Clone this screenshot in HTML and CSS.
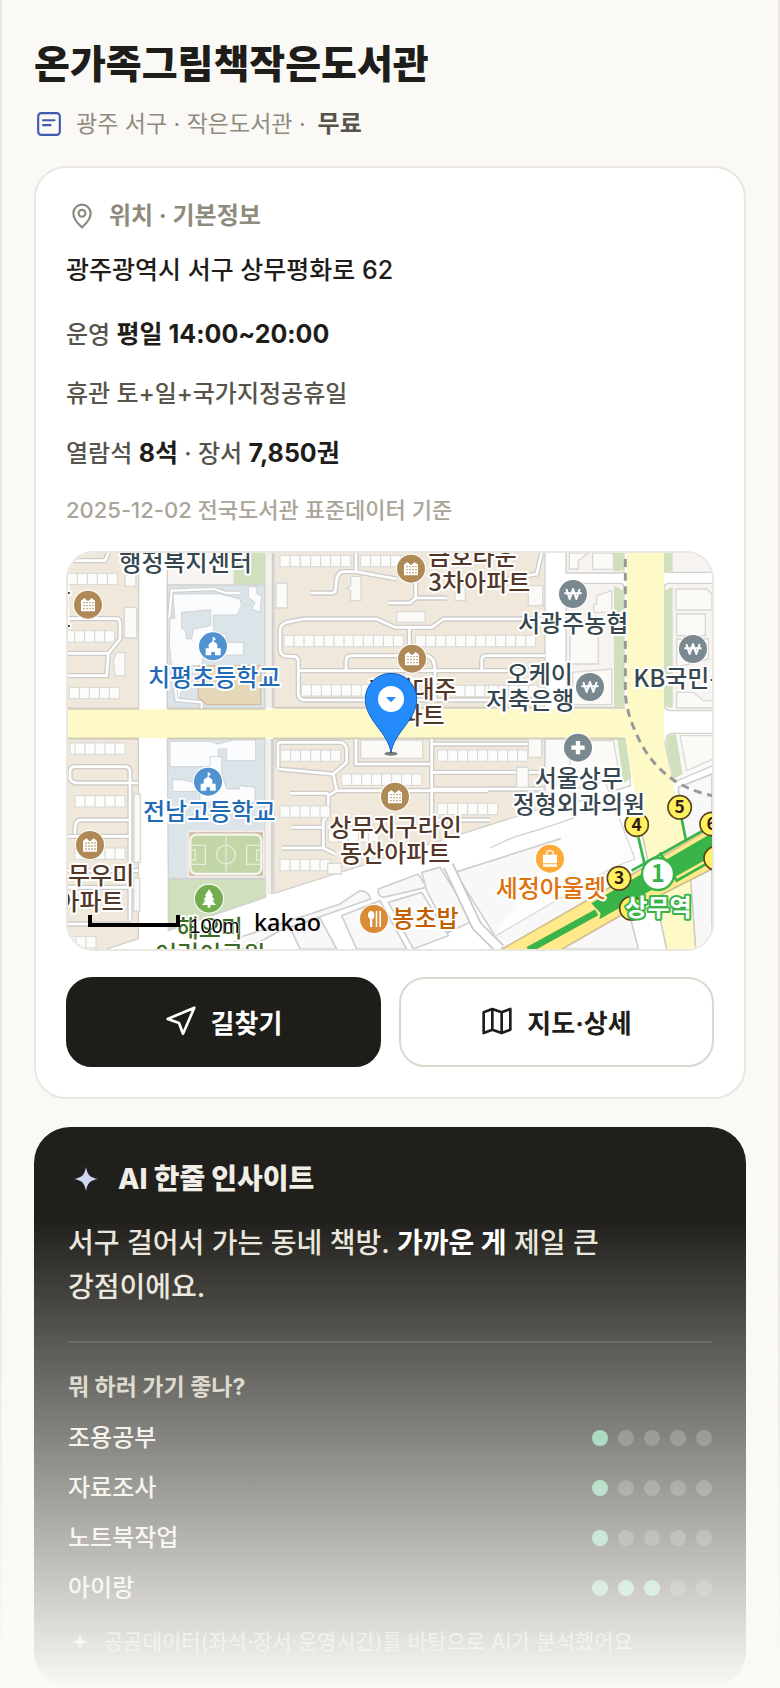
FILE: index.html
```html
<!DOCTYPE html>
<html lang="ko">

<head>
    <meta charset="UTF-8">
    <meta name="viewport" content="width=device-width, initial-scale=1.0">
    <title>온가족그림책작은도서관</title>
    <link rel="stylesheet" href="styles.css">
</head>

<body>
    <main class="page">
        <header class="head">
            <h1>온가족그림책작은도서관</h1>
            <p class="meta">
                <svg class="meta-icon" viewBox="0 0 24 24" aria-hidden="true">
                    <rect x="2" y="2" width="20" height="20" rx="3" />
                    <path d="M6.500 8.500h10.500M6.500 13h7" />
                </svg>
                <span>광주 서구 · 작은도서관 ·</span>
                <b>무료</b>
            </p>
        </header>

        <section class="card">
            <h2 class="card-title">
                <svg class="pin-icon" viewBox="0 0 24 24" aria-hidden="true">
                    <path d="M12 22.500C8 19 4 15 4 9.500a8 8 0 0 1 16 0C20 15 16 19 12 22.500Z" />
                    <circle cx="12" cy="9.500" r="3.200" />
                </svg>
                위치 · 기본정보
            </h2>
            <p class="address">광주광역시 서구 상무평화로 62</p>
            <p class="info">운영 <b>평일 14:00~20:00</b></p>
            <p class="info">휴관 토+일+국가지정공휴일</p>
            <p class="info">열람석 <b>8석</b> · 장서 <b>7,850권</b></p>
            <p class="source">2025-12-02 전국도서관 표준데이터 기준</p>

            <div class="map">
                <svg class="map-svg" viewBox="24 27 1932 1188" preserveAspectRatio="xMidYMid slice" role="img" aria-label="지도">
                    <defs>
                        <g id="apt">
                            <circle r="45" fill="#fff" />
                            <circle r="42" fill="#af8a57" />
                            <path d="M-21 20V-12L-11-20L-2-12H2L11-20L21-12V20Z" fill="#fff" />
                            <path d="M-14-6H17M-14 3H17M-14 12H17" stroke="#af8a57" stroke-width="4" stroke-dasharray="4 5" />
                        </g>
                        <g id="school">
                            <circle r="45" fill="#fff" />
                            <circle r="42" fill="#5093d0" />
                            <path d="M-22 27V6H-13V-6L-1-15V-28H2L9-22L2-17V-15L13-6V6H23V27H6V17H-5V27Z" fill="#fff" />
                        </g>
                        <g id="bank">
                            <circle r="45" fill="#fff" />
                            <circle r="42" fill="#7a898f" />
                            <path d="M-20-15L-10 15L0-15L10 15L20-15M-26-2H26" fill="none" stroke="#fff" stroke-width="6" stroke-linejoin="round" />
                        </g>
                        <g id="houses">
                            <rect width="150" height="34" fill="#fcfcfa" stroke="#d8d8d6" stroke-width="3" />
                            <path d="M30 0V34M60 0V34M90 0V34M120 0V34" stroke="#d2d2d0" stroke-width="3" />
                        </g>
                        <path id="lanes" d="M24 50H135L145 27M24 224H170Q180 224 180 240V285L145 328H24M145 328L140 395H24M30 680Q32 668 45 668H195Q210 668 210 685V1130M30 680V700Q30 715 50 717H235M45 870Q42 828 62 828H210M24 877H210M24 980H235M24 1030H210M24 1140H210M888 27V82M752 147H815Q828 147 828 125Q828 85 850 83H888L1010 105M1067 100V162H1160M1067 162L1050 177H985M1290 225H1150L1115 250H1005L950 225H730L680 235Q660 242 660 260V315Q660 335 680 337H700Q715 337 715 355V450Q715 468 735 468H1440M715 380H1455M858 378V350Q858 335 875 335H1100Q1125 340 1125 380V465M1048 250V330M1265 378V350Q1265 335 1280 335H1455M1290 225H1450M1445 27L1430 90L1290 115M654 670V600Q654 595 665 595H840Q860 598 860 620V655L820 690L655 675M820 690L830 740L805 755V810L790 830V910M830 740H1285M888 585V660H1110M1115 585V870M1115 600H1450M1115 685H1450M1115 735H1450M690 748H805M695 850H790M665 912H790L825 930M1115 828H1290" />
                    </defs>

                    <rect x="24" y="27" width="1932" height="1188" fill="#fff" />

                    <!-- blocks -->
                    <g stroke="#d2d1cf" stroke-width="4">
                        <path d="M10 10H236V492H10ZM10 585H235V1184L110 1225H10Z" fill="#f0e8da" />
                        <path d="M322 10H615V492H322Z" fill="#f6f3f0" />
                        <path d="M322 123H615V492H322ZM322 585H615V1003H325Z" fill="#dbe4e8" />
                        <path d="M325 1005H617V1060L325 1160Z" fill="#d0dfbc" />
                        <path d="M642 10H1455V490H642ZM640 585H1455V790L642 1048Z" fill="#f0e8da" />
                        <path d="M1518 10H1692V80Q1692 87 1684 87H1518ZM1518 118H1680Q1692 118 1692 132V490H1518Z" fill="#f6f3f0" />
                        <path d="M1812 10H1956V85H1820Q1812 85 1812 75ZM1812 135Q1812 118 1826 118H1970V500H1830Q1812 498 1812 480Z" fill="#f6f3f0" />
                        <path d="M1815 600Q1815 568 1840 568H1970V660L1840 715Z" fill="#f9f9f7" />
                        <path d="M1455 790V585H1695L1712 725L1500 790Z" fill="#f9f9f7" />
                    </g>
                    <path d="M521 27H617V121H521ZM1662 27H1692V78L1662 84ZM1662 125L1692 140V488H1662ZM1814 27H1838V83H1814ZM1814 140L1838 128V490H1822L1814 480ZM1818 600L1824 575L1848 570L1868 690L1840 705ZM1672 585H1697L1714 700L1690 720Z" fill="#d0dfbc" />
                    <path d="M617 27H640V492H617ZM617 585H638V1050H617Z" fill="#f3f1ec" />

                    <!-- southern blocks under the diagonal road -->
                    <g fill="#f8f8f8" stroke="#cfcfcf" stroke-width="5">
                        <path d="M500 1215L540 1180L840 1080L900 1040Q925 1040 932 1065L660 1160L560 1215Z" />
                        <path d="M955 1035L1075 990L1100 1030L970 1060Q950 1055 955 1035Z" />
                        <path d="M720 1215L690 1150L780 1122L830 1215Z" />
                        <path d="M845 1115L960 1070L1040 1215H890Z" />
                        <path d="M985 1075L1085 1045L1165 1175L1060 1215Z" />
                        <path d="M1085 985L1140 970L1240 1130L1165 1165L1100 1040Z" />
                        <path d="M1185 985L1640 840L1735 1215H1330Z" />
                        <path d="M1755 1000L1956 890V1215H1905L1880 1040Z" />
                        <path d="M1855 730L1956 690V860L1870 900Z" />
                    </g>
                    <path d="M1165 965L1250 1145L1320 1215" fill="none" stroke="#c8c8c8" stroke-width="34" />
                    <path d="M1165 965L1250 1145L1320 1215" fill="none" stroke="#fff" stroke-width="24" />
                    <path d="M1290 912L1360 880L1475 845L1700 765" fill="none" stroke="#d2d1cf" stroke-width="4" />
                    <path d="M1300 1180L1650 975L1725 945L1630 700" fill="#fdfdfd" stroke="#d9d9d9" stroke-width="4" />

                    <!-- school grounds -->
                    <g fill="#fbfcfe" stroke="#d0d3d6" stroke-width="3">
                        <path d="M343 150L480 150L540 165L545 185L530 213H460V265L498 270V295H550V333H430L425 365H370L360 470H345L328 300L330 225L345 222L338 150Z" />
                        <path d="M565 128H590V150L605 155L600 205L575 195L585 175L565 160Z" />
                        <path d="M330 592H450L475 600L520 588H587V650H500V615H475V668H330Z" />
                        <path d="M338 707H365L400 715H420V742H338ZM450 638H485V690L500 735H538V725L585 730V775H420V740H450Z" />
                    </g>
                    <path d="M365 205L452 197V245L400 255L395 285H380L375 255H365Z" fill="#dbe4e8" stroke="#d0d3d6" stroke-width="3" />
                    <path d="M328 220L335 140L460 135L500 147H540M345 430L350 468L425 475V495" fill="none" stroke="#cdcfd1" stroke-width="14" />
                    <path d="M328 220L335 140L460 135L500 147H540M345 430L350 468L425 475V495" fill="none" stroke="#fff" stroke-width="7" />
                    <path d="M415 365H602V482H440L415 460Z" fill="#e5d8b9" stroke="#d5bfa2" stroke-width="4" />
                    <rect x="385" y="862" width="226" height="136" fill="#d1bea9" stroke="#f4ece4" stroke-width="5" />
                    <rect x="391" y="872" width="213" height="118" rx="18" fill="#c2d6a7" stroke="#f4f5ec" stroke-width="7" />
                    <path d="M498 872V990M394 904H436V961H394M602 904H560V961H602M394 918H406V948H394M602 918H590V948H602" fill="none" stroke="#e4edd8" stroke-width="4" />
                    <circle cx="498" cy="932" r="28" fill="none" stroke="#e4edd8" stroke-width="4" />

                    <!-- yellow roads -->
                    <path d="M24 496H1702V582H24Z" fill="#fdfac8" />
                    <path d="M1700 27H1812V600L1840 720L1888 950L1907 1215H1820L1800 1080L1740 840L1700 600Z" fill="#fdfac8" />
                    <path d="M24 495H236M322 495H615M640 492H1455M1518 492H1695M24 583H236M322 583H615M640 583H1455M1455 583H1695M1740 840L1820 1215M1888 950L1907 1215" fill="none" stroke="#d3cdb8" stroke-width="5" />

                    <!-- lanes inside the apartment blocks -->
                    <use href="#lanes" fill="none" stroke="#cccccb" stroke-width="16" />
                    <use href="#lanes" fill="none" stroke="#fff" stroke-width="8" />
                    <path d="M638 27V492M636 585V1050" stroke="#cccccb" stroke-width="5" />

                    <!-- houses -->
                    <use href="#houses" x="22" y="88" />
                    <use href="#houses" x="14" y="260" />
                    <use href="#houses" x="28" y="430" />
                    <use href="#houses" x="30" y="597" />
                    <use href="#houses" x="45" y="597" />
                    <use href="#houses" x="45" y="755" />
                    <use href="#houses" x="45" y="912" />
                    <use href="#houses" x="-42" y="1178" />
                    <use href="#houses" x="660" y="34" />
                    <use href="#houses" x="722" y="34" />
                    <use href="#houses" x="902" y="34" />
                    <use href="#houses" x="672" y="274" />
                    <use href="#houses" x="822" y="274" />
                    <use href="#houses" x="880" y="274" />
                    <use href="#houses" x="1067" y="274" />
                    <use href="#houses" x="1217" y="274" />
                    <use href="#houses" x="1277" y="274" />
                    <use href="#houses" x="724" y="422" />
                    <use href="#houses" x="844" y="422" />
                    <use href="#houses" x="1185" y="424" />
                    <use href="#houses" x="1285" y="424" />
                    <use href="#houses" x="662" y="618" />
                    <use href="#houses" x="692" y="618" />
                    <use href="#houses" x="845" y="690" />
                    <use href="#houses" x="935" y="690" />
                    <use href="#houses" x="660" y="786" />
                    <use href="#houses" x="660" y="946" />
                    <use href="#houses" x="805" y="860" />
                    <use href="#houses" x="1133" y="618" />
                    <use href="#houses" x="1253" y="618" />
                    <use href="#houses" x="1133" y="778" />
                    <use href="#houses" x="1163" y="778" />
                    <g fill="#fbfaf6" stroke="#d8d8d6" stroke-width="4">
                        <path d="M195 85H228V127H195ZM193 190H230V282H193ZM168 326H195V396H165L160 350ZM222 750H241V955H222ZM221 1003H239V1102H221Z" />
                        <path d="M648 117H682V192H648ZM872 97H903V170H872V140L860 133L872 126ZM1010 203H1096V235H1010ZM1185 125H1216V170H1185ZM902 588H1088V643H902ZM803 958H844V990H803Z" />
                        <path d="M1405 125H1448V185H1405ZM1405 585H1445V640H1405ZM1370 670H1405V730H1370Z" />
                        <path d="M1528 27H1585L1555 50V75H1528ZM1598 27H1660V76H1598ZM1530 230H1615V360H1530ZM1610 155L1655 140V205H1602V180H1610ZM1538 385L1655 375V482H1538ZM1530 590H1660L1680 700L1530 740Z" />
                        <path d="M1848 135H1940L1956 150V198H1848ZM1850 210H1936V275H1850ZM1850 285H1945V345L1850 370ZM1850 445H1900L1930 470H1970V492H1850ZM1860 575H1970V640L1880 680Z" />
                    </g>

                    <!-- railway -->
                    <path d="M1696 45V445Q1698 500 1725 560Q1790 720 1956 755" fill="none" stroke="#999" stroke-width="9" stroke-dasharray="24 17" />

                    <!-- subway -->
                    <path d="M1300 1230L1650 1030L1956 850V975L1690 1110L1480 1230Z" fill="#ffe98a" stroke="#cdbf92" stroke-width="5" />
                    <path d="M1405 1218L1610 1105" stroke="#38b449" stroke-width="20" />
                    <path d="M1594 1078L1965 862V932L1618 1126L1622 1108Z" fill="#38b449" />
                    <path d="M1715 980L1960 842M1735 880L1755 965M1865 825L1877 885M1800 925L1850 1010L1956 950" fill="none" stroke="#38b449" stroke-width="8" />
                    <g font-size="52" font-weight="700" text-anchor="middle" class="exit">
                        <g fill="#fff060" stroke="#57411f" stroke-width="5">
                            <circle cx="1730" cy="842" r="35" />
                            <circle cx="1859" cy="790" r="35" />
                            <circle cx="1955" cy="840" r="35" />
                            <circle cx="1677" cy="1003" r="35" />
                            <circle cx="1714" cy="1093" r="35" />
                            <circle cx="1967" cy="943" r="35" />
                        </g>
                        <text x="1730" y="860">4</text>
                        <text x="1859" y="808">5</text>
                        <text x="1955" y="858">6</text>
                        <text x="1677" y="1021">3</text>
                    </g>
                    <circle cx="1794" cy="990" r="48" fill="#fff" stroke="#38b449" stroke-width="7" />
                    <text x="1794" y="1015" font-size="70" font-weight="700" text-anchor="middle" fill="#38b449" class="line-no">1</text>

                    <!-- places -->
                    <use href="#apt" x="84" y="182" />
                    <use href="#apt" x="1053" y="74" />
                    <use href="#apt" x="1056" y="344" />
                    <use href="#apt" x="1005" y="758" />
                    <use href="#apt" x="90" y="903" />
                    <use href="#school" x="459" y="307" />
                    <use href="#school" x="444" y="713" />
                    <use href="#bank" x="1539" y="150" />
                    <use href="#bank" x="1590" y="429" />
                    <use href="#bank" x="1899" y="315" />
                    <g transform="translate(1554 611)">
                        <circle r="45" fill="#fff" />
                        <circle r="42" fill="#7a898f" />
                        <path d="M-20 0H20M0-20V20" stroke="#fff" stroke-width="13" />
                    </g>
                    <g transform="translate(447 1064)">
                        <circle r="45" fill="#fff" />
                        <circle r="42" fill="#73ae4e" />
                        <path d="M0-28L13-9H8L17 5H10L21 19H4V27H-4V19H-21L-10 5H-17L-8-9H-13Z" fill="#fff" />
                    </g>
                    <g transform="translate(942 1125)">
                        <circle r="45" fill="#fff" />
                        <circle r="42" fill="#d98b36" />
                        <path d="M-9-25a12 14 0 0 1 4 26V24H-12V1a12 14 0 0 1 3-26ZM5-24H10V24H5ZM16-24H21V24H16Z" fill="#fff" />
                    </g>
                    <g transform="translate(1470 944)">
                        <circle r="45" fill="#fff" />
                        <circle r="42" fill="#fdaa38" />
                        <path d="M-21-12H21V14H-21ZM-21 17H21V24H-21Z" fill="#fff" />
                        <path d="M-10-5V-15a10 9 0 0 1 20 0V-5" fill="none" stroke="#fff" stroke-width="4" />
                    </g>

                    <g class="labels">
                        <g fill="#37474f">
                            <text x="178" y="82">행정복지센터</text>
                            <text x="1374" y="264">서광주농협</text>
                            <text x="1340" y="417">오케이</text>
                            <text x="1278" y="494">저축은행</text>
                            <text x="1720" y="430">KB국민은행</text>
                            <text x="1424" y="729">서울상무</text>
                            <text x="1358" y="808">정형외과의원</text>
                        </g>
                        <g fill="#1f6bb8">
                            <text x="264" y="426">치평초등학교</text>
                            <text x="249" y="829">전남고등학교</text>
                        </g>
                        <g fill="#523729">
                            <text x="1105" y="62">금호타운</text>
                            <text x="1105" y="141">3차아파트</text>
                            <text x="925" y="462">라인대주</text>
                            <text x="955" y="540">아파트</text>
                            <text x="808" y="875">상무지구라인</text>
                            <text x="840" y="953">동산아파트</text>
                            <text x="24" y="1021">무우미</text>
                            <text x="-8" y="1099">아파트</text>
                            <text x="-34" y="170">동</text>
                            <text x="-34" y="250">트</text>
                        </g>
                        <g fill="#3b6b22">
                            <text x="350" y="1178">해오미</text>
                            <text x="285" y="1256">어린이공원</text>
                        </g>
                        <text x="997" y="1150" fill="#c45f00">봉초밥</text>
                        <text x="1307" y="1060" fill="#e0700c">세정아울렛</text>
                        <text x="1696" y="1115" class="station">상무역</text>
                    </g>

                    <!-- current marker -->
                    <ellipse cx="993" cy="629" rx="20" ry="6" fill="#000" opacity=".5" />
                    <path d="M993 627C985 565 916 530 916 465A77 77 0 0 1 1070 465C1070 530 1001 565 993 627Z" fill="#258bfb" stroke="#1560c4" stroke-width="3" />
                    <circle cx="993" cy="465" r="39" fill="#fff" />
                    <path d="M978 459H1008L993 475Z" fill="#258bfb" />

                    <!-- scale bar -->
                    <path d="M90 1113V1143H354V1113" fill="none" stroke="#000" stroke-width="12" />
                    <text x="388" y="1166" class="scale-text">100m</text>
                    <text x="582" y="1160" class="brand">kakao</text>
                </svg>
            </div>

            <div class="actions">
                <button class="btn btn-dark" type="button">
                    <svg class="btn-icon" viewBox="0 0 24 24" aria-hidden="true">
                        <path d="M22 2L2 10.500l8.500 3L13.500 21.500Z" />
                    </svg>
                    길찾기
                </button>
                <button class="btn" type="button">
                    <svg class="btn-icon" viewBox="0 0 24 24" aria-hidden="true">
                        <path d="M2 5.500L8.500 3l7 2.500L22 3v15.500L15.500 21l-7-2.500L2 21ZM8.500 3v15.500M15.500 5.500V21" />
                    </svg>
                    지도·상세
                </button>
            </div>
        </section>

        <section class="insight">
            <h2 class="insight-title">
                <svg class="star-icon" viewBox="0 0 24 24" aria-hidden="true">
                    <path d="M12 0C13.500 8 16 10.500 24 12C16 13.500 13.500 16 12 24C10.500 16 8 13.500 0 12C8 10.500 10.500 8 12 0Z" />
                </svg>
                AI 한줄 인사이트
            </h2>
            <p class="summary">서구 걸어서 가는 동네 책방. <b>가까운 게</b> 제일 큰 강점이에요.</p>
            <h3>뭐 하러 가기 좋나?</h3>
            <ul class="scores">
                <li>조용공부 <span class="dots"><i class="on"></i><i></i><i></i><i></i><i></i></span></li>
                <li>자료조사 <span class="dots"><i class="on"></i><i></i><i></i><i></i><i></i></span></li>
                <li>노트북작업 <span class="dots"><i class="on"></i><i></i><i></i><i></i><i></i></span></li>
                <li>아이랑 <span class="dots"><i class="on"></i><i class="on"></i><i class="on"></i><i></i><i></i></span></li>
            </ul>
            <p class="note">
                <svg class="note-icon" viewBox="0 0 24 24" aria-hidden="true">
                    <path d="M12 0C13.500 8 16 10.500 24 12C16 13.500 13.500 16 12 24C10.500 16 8 13.500 0 12C8 10.500 10.500 8 12 0Z" />
                </svg>
                공공데이터(좌석·장서·운영시간)를 바탕으로 AI가 분석했어요
            </p>
        </section>
    </main>
    <div class="fade"></div>
</body>

</html>
```
FILE: styles.css
```css
* {
    margin: 0;
    padding: 0;
    box-sizing: border-box;
}

body {
    font-family: Inter, "Noto Sans CJK KR", sans-serif;
    background-color: #faf9f5;
    color: #1e1d19;
}

svg {
    flex-shrink: 0;
}

.page {
    min-height: 100vh;
    padding: 36px 32px 0;
    border-left: 2px solid #e9e7e0;
    border-right: 2px solid #e9e7e0;
}

h1 {
    font-size: 39px;
    line-height: 56px;
    font-weight: 800;
}

.meta {
    display: flex;
    align-items: center;
    gap: 12px;
    margin-top: 12px;
    font-size: 23px;
    line-height: 40px;
    color: #8f8a7e;
}

.meta b {
    font-size: 24px;
    color: #57544b;
    font-weight: 600;
}

.meta-icon {
    width: 26px;
    height: 26px;
    margin: 0 2px;
    fill: none;
    stroke: #3f5bb0;
    stroke-width: 2;
    stroke-linecap: round;
}

.card {
    margin-top: 22px;
    padding: 30px;
    background-color: #fff;
    border: 2px solid #e9e7e0;
    border-radius: 32px;
}

.card-title {
    display: flex;
    align-items: center;
    gap: 14px;
    font-size: 24px;
    line-height: 36px;
    font-weight: 700;
    color: #8f8a7e;
}

.pin-icon {
    width: 26px;
    height: 26px;
    margin-left: 3px;
    fill: none;
    stroke: currentColor;
    stroke-width: 2;
}

.address {
    margin: 14px 0 22px;
    font-size: 25px;
    line-height: 44px;
    font-weight: 500;
}

.info {
    margin-bottom: 19px;
    font-size: 24px;
    line-height: 40px;
    font-weight: 500;
    color: #57544b;
}

.info b {
    font-size: 25px;
    color: #1e1d19;
}

.source {
    font-size: 22px;
    line-height: 34px;
    font-weight: 500;
    color: #aaa598;
}

.map {
    height: 400px;
    margin-top: 24px;
    border: 2px solid #e9e7e0;
    border-radius: 28px;
    overflow: hidden;
}

.map-svg {
    display: block;
    width: 100%;
    height: 100%;
}

.labels {
    font-family: "Noto Sans CJK KR", sans-serif;
    font-size: 72px;
    font-weight: 500;
    stroke: #fff;
    stroke-width: 12px;
    stroke-linejoin: round;
    paint-order: stroke;
}

.station {
    font-weight: 700;
    fill: #fff;
    stroke: #38b449;
}

.exit text {
    font-family: "Noto Sans CJK KR", sans-serif;
    fill: #2d1d12;
}

.line-no {
    font-family: "Noto Sans CJK KR", sans-serif;
}

.scale-text {
    font-family: "Liberation Sans", sans-serif;
    font-size: 60px;
    stroke: #fff;
    stroke-width: 3px;
    paint-order: stroke;
}

.brand {
    font-family: "Noto Sans", sans-serif;
    font-size: 70px;
    font-weight: 500;
}

.actions {
    display: grid;
    grid-template-columns: 1fr 1fr;
    gap: 18px;
    margin-top: 26px;
}

.btn {
    display: flex;
    align-items: center;
    justify-content: center;
    gap: 14px;
    height: 90px;
    padding-bottom: 2px;
    font-family: inherit;
    font-size: 26px;
    font-weight: 700;
    color: #1e1d19;
    background-color: #fff;
    border: 2px solid #dbd8cf;
    border-radius: 26px;
}

.btn-dark {
    color: #fff;
    background-color: #1e1d19;
    border-color: #1e1d19;
}

.btn-icon {
    width: 32px;
    height: 32px;
    fill: none;
    stroke: currentColor;
    stroke-width: 2;
    stroke-linejoin: round;
}

.insight {
    margin-top: 28px;
    padding: 32px 34px 28px;
    background-color: #201f1b;
    border-radius: 36px;
    color: #f0eee6;
}

.insight-title {
    display: flex;
    align-items: center;
    gap: 20px;
    font-size: 28px;
    line-height: 40px;
    font-weight: 800;
}

.star-icon {
    width: 24px;
    height: 24px;
    margin-left: 6px;
    fill: #cdd7f3;
}

.summary {
    margin-top: 22px;
    padding-right: 64px;
    font-size: 28px;
    line-height: 44px;
    font-weight: 500;
    word-break: keep-all;
    color: #e9e6dc;
}

.summary b {
    color: #fff;
}

h3 {
    margin-top: 32px;
    padding-top: 26px;
    border-top: 2px solid rgba(255, 255, 255, 0.1);
    font-size: 23px;
    line-height: 36px;
    color: #cfcabc;
}

.scores {
    margin-top: 8px;
    list-style: none;
}

.scores li {
    display: flex;
    justify-content: space-between;
    align-items: center;
    font-size: 24px;
    line-height: 50px;
    font-weight: 500;
}

.dots {
    display: flex;
    gap: 10px;
}

.dots i {
    width: 16px;
    height: 16px;
    border-radius: 50%;
    background-color: rgba(255, 255, 255, 0.2);
}

.dots .on {
    background-color: #6ac197;
}

.note {
    display: flex;
    align-items: center;
    gap: 16px;
    margin-top: 12px;
    font-size: 21px;
    line-height: 34px;
    color: #b5b0a3;
}

.note-icon {
    width: 16px;
    height: 16px;
    margin-left: 4px;
    fill: #cdd7f3;
}

/* fades the page out at the bottom of the window */
.fade {
    position: fixed;
    left: 0;
    right: 0;
    bottom: 0;
    height: 470px;
    background: linear-gradient(rgba(250, 249, 245, 0), #faf9f5);
    pointer-events: none;
}
```
